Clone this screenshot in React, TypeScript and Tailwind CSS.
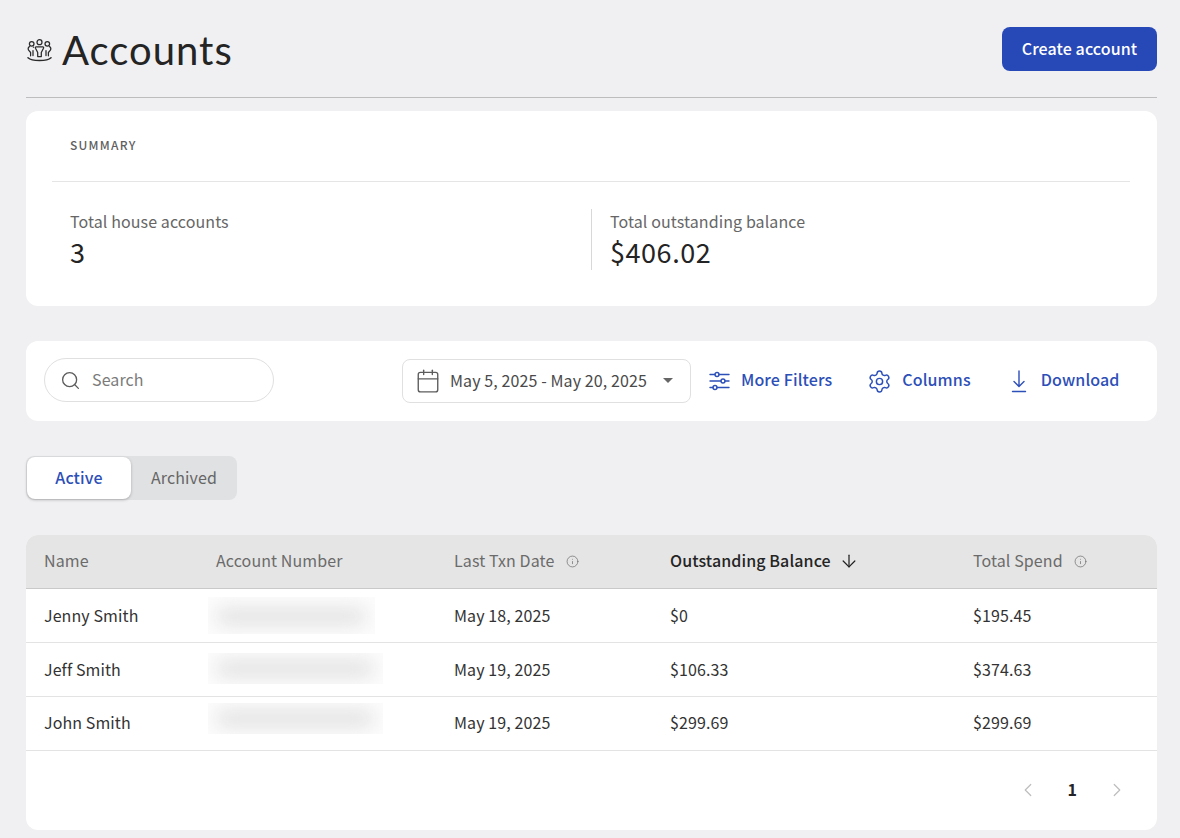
import React from "react";
import { Search, Calendar, Settings, ArrowDown, Info, ChevronLeft, ChevronRight } from "lucide-react";

const font = "font-['Noto_Sans_CJK_JP','Liberation_Sans',sans-serif]";

function PeopleIcon() {
  return (
    <svg width="25" height="23" viewBox="0 0 25 23" fill="none" stroke="#2a2a2a" strokeWidth="1.25" strokeLinecap="round" strokeLinejoin="round">
      <circle cx="12.500" cy="3.200" r="2.500" />
      <circle cx="4.700" cy="4.800" r="2.300" />
      <circle cx="20.300" cy="4.800" r="2.300" />
      <path d="M9.200 7.800h6.600c.8 0 1 .7.700 1.400l-2.200 4.300v4h-3.600v-4L8.500 9.200c-.3-.7-.1-1.400.7-1.400z" />
      <path d="M2.500 7.600C1.200 8.200 1 9.800 1.600 11.200l2 2.300v3.300M6.400 8.200l.2 0M6 11.500v5" />
      <path d="M22.500 7.600c1.300.6 1.500 2.200.9 3.600l-2 2.300v3.300M19 11.500v5" />
      <path d="M1 18.800c2 1.900 6 2.800 11.500 2.800s9.500-.9 11.500-2.800" strokeWidth="1.500" />
    </svg>
  );
}

function FilterIcon() {
  return (
    <svg width="21" height="20" viewBox="0 0 21 20" fill="none" stroke="currentColor" strokeWidth="1.4" strokeLinecap="round">
      <path d="M1 3.500h5M10 3.500h10M1 10h11M16 10h4M1 16.500h3M8 16.500h12" />
      <circle cx="8" cy="3.500" r="2" />
      <circle cx="14" cy="10" r="2" />
      <circle cx="6" cy="16.500" r="2" />
    </svg>
  );
}

function ActionLink({ icon, label, className }: { icon: React.ReactNode; label: string; className: string }) {
  return (
    <button className={`flex items-center text-[16px] font-medium leading-none tracking-[0.12px] text-[#2d4fb8] ${className}`}>
      {icon}
      <span className="mb-[4px]">{label}</span>
    </button>
  );
}

function BlurCell({ className, bar }: { className: string; bar: string }) {
  return (
    <div className={`absolute left-[-8px] overflow-hidden bg-[#fcfcfc] ${className}`}>
      <div className={`ml-[8px] h-[17px] rounded-full bg-[#e2e2e2] blur-[9px] ${bar}`} />
    </div>
  );
}

const rows = [
  { name: "Jenny Smith", date: "May 18, 2025", bal: "$0", spend: "$195.45", box: "top-[8px] h-[37px] w-[167px] pt-[11px]", bar: "w-[150px]" },
  { name: "Jeff Smith", date: "May 19, 2025", bal: "$106.33", spend: "$374.63", box: "top-[10px] h-[31px] w-[175px] pt-[7px]", bar: "w-[158px]" },
  { name: "John Smith", date: "May 19, 2025", bal: "$299.69", spend: "$299.69", box: "top-[6px] h-[31px] w-[175px] pt-[7px]", bar: "w-[158px]" },
];

const colA = "w-[172px] shrink-0";
const colB = "w-[238px] shrink-0";
const colC = "w-[216px] shrink-0";
const colD = "w-[303px] shrink-0";

export default function App() {
  return (
    <div className={`${font} min-h-[838px] bg-[#f0f0f2] pl-[26px] pr-[23px] pt-[27px] text-[#242424]`}>
      <div className="flex h-[71px] items-start justify-between border-b border-[#bdbdbd]">
        <div className="flex items-center gap-[10px]">
          <div className="mb-[3px] ml-[1px]"><PeopleIcon /></div>
          <h1 className="mb-[4px] font-['Lato',sans-serif] text-[40px] font-normal leading-[46px] tracking-[1px] text-[#242424]">Accounts</h1>
        </div>
        <button className="h-[44px] w-[155px] rounded-lg bg-[#2749b8] pb-[2px] text-[16px] font-medium tracking-[0.1px] text-white">Create account</button>
      </div>

      <section className="mt-[13px] h-[195px] rounded-xl bg-white pl-[26px] pr-[27px]">
        <div className="h-[71px] border-b border-[#e5e5e5] pl-[18px] pt-[26px] text-[12px] font-medium leading-[16px] tracking-[1.25px] text-[#5f5f5f]">SUMMARY</div>
        <div className="mt-[27px] flex h-[61px]">
          <div className="w-[540px] border-r border-[#d8d8d8] pl-[18px]">
            <div className="-mt-[1px] text-[16px] leading-[26px] tracking-[0.1px] text-[#666]">Total house accounts</div>
            <div className="text-[27px] leading-[35px] tracking-[0.55px]">3</div>
          </div>
          <div className="pl-[18px]">
            <div className="-mt-[1px] text-[16px] leading-[26px] tracking-[0.1px] text-[#666]">Total outstanding balance</div>
            <div className="text-[27px] leading-[35px] tracking-[0.55px]">$406.02</div>
          </div>
        </div>
      </section>

      <section className="mt-[35px] flex h-[80px] items-center rounded-xl bg-white pl-[18px]">
        <div className="mb-[2px] flex h-[44px] w-[230px] items-center gap-[11px] rounded-full border border-[#e0e0e0] pl-[15px] text-[16px] tracking-[0.1px] text-[#7b7b7b]">
          <Search size={21} strokeWidth={1.5} color="#5c5c5c" />
          <span className="mb-[2px]">Search</span>
        </div>
        <div className="ml-[128px] flex h-[44px] w-[289px] items-center rounded-lg border border-[#e0e0e0] pl-[12px] text-[16px] tracking-[0.1px] text-[#4a4a4a]">
          <Calendar size={26} strokeWidth={1.25} color="#5c5c5c" />
          <span className="mb-[2px] ml-[9px]">May 5, 2025 - May 20, 2025</span>
          <span className="mb-[2px] ml-[16px] h-0 w-0 border-x-[5px] border-t-[5px] border-x-transparent border-t-[#666]" />
        </div>
        <ActionLink className="ml-[18px] gap-[11px]" label="More Filters" icon={<FilterIcon />} />
        <ActionLink className="ml-[37px] gap-[11px]" label="Columns" icon={<Settings size={25} strokeWidth={1.4} className="-ml-[2px] -mr-[1px]" />} />
        <ActionLink
          className="ml-[38px] gap-[12px]"
          label="Download"
          icon={
            <svg width="20" height="24" viewBox="0 0 20 24" fill="none" stroke="currentColor" strokeWidth="1.4" strokeLinecap="round" strokeLinejoin="round">
              <path d="M10 2v15M5 12.500l5 5 5-5M3.500 22.500h13" />
            </svg>
          }
        />
      </section>

      <div className="mt-[35px] flex h-[44px] w-[211px] rounded-lg bg-[#e0e1e3] py-[1px] pl-[1px] text-[16px] tracking-[0.1px]">
        <div className="flex w-[104px] items-center justify-center rounded-lg bg-white pb-[2px] font-medium text-[#2d4fb8] shadow-[0_1px_3px_rgba(0,0,0,0.25)]">Active</div>
        <div className="flex flex-1 items-center justify-center pb-[2px] text-[#666]">Archived</div>
      </div>

      <section className="mt-[35px] h-[295px] overflow-hidden rounded-xl bg-white">
        <div className="flex h-[54px] items-center border-b border-[#c9c9c9] bg-[#e5e5e5] pb-[3px] pl-[18px] text-[16px] tracking-[0.1px] text-[#6b6b6b]">
          <div className={colA}>Name</div>
          <div className={colB}>Account Number</div>
          <div className={`${colC} flex items-center gap-[12px]`}>Last Txn Date <Info size={13} strokeWidth={1.3} className="mt-[2px]" /></div>
          <div className={`${colD} flex items-center gap-[8px] font-medium text-[#242424]`}>Outstanding Balance <ArrowDown size={20} strokeWidth={1.5} className="mt-[2px]" /></div>
          <div className="flex items-center gap-[11px]">Total Spend <Info size={13} strokeWidth={1.3} className="mt-[2px]" /></div>
        </div>
        {rows.map((r, i) => (
          <div key={r.name} className={`flex h-[54px] items-center border-b border-[#e3e3e3] pl-[18px] text-[16px] tracking-[0.1px] text-[#333] ${i === 2 ? "pb-[4px]" : "pb-[2px]"}`}>
            <div className={colA}>{r.name}</div>
            <div className={`${colB} relative h-[54px] ${i === 2 ? "-mb-[4px]" : "-mb-[2px]"}`}>
              <BlurCell className={r.box} bar={r.bar} />
            </div>
            <div className={colC}>{r.date}</div>
            <div className={colD}>{r.bal}</div>
            <div>{r.spend}</div>
          </div>
        ))}
        <div className="flex h-[79px] items-center justify-end pb-[2px] pr-[29px] text-[16px]">
          <ChevronLeft size={22} strokeWidth={1.3} color="#bdbdbd" />
          <span className="mx-[29px] mb-[2px] font-bold text-[#242424]">1</span>
          <ChevronRight size={22} strokeWidth={1.3} color="#bdbdbd" />
        </div>
      </section>
    </div>
  );
}
